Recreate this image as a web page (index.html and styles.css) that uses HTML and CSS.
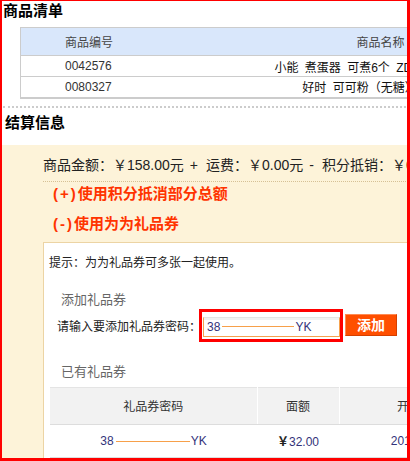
FILE: index.html
```html
<!doctype html>
<html>
	<head>
		<meta charset="utf-8">
		<title>结算信息</title>
		<link rel="stylesheet" href="styles.css">
	</head>
	<body>
		<div class="frame">
			<div class="page">
				<h2 class="title">商品清单</h2>
				<table class="goods">
					<tr>
						<th class="c-no">商品编号</th>
						<th class="c-name">商品名称</th>
					</tr>
					<tr>
						<td class="c-no">0042576</td>
						<td class="c-name">小能 煮蛋器 可煮6个 ZD-MQ01A 白色</td>
					</tr>
					<tr>
						<td class="c-no">0080327</td>
						<td class="c-name">好时 可可粉（无糖）226g/罐</td>
					</tr>
				</table>
				<div class="dots"></div>

				<h2 class="title title-pay">结算信息</h2>
				<div class="pay">
					<div class="sum">
						商品金额：<span class="num">￥158.00</span>元<span class="op">+</span>运费：<span class="num">￥0.00</span>元<span class="op">-</span>积分抵销：<span class="num">￥0.00</span>元
					</div>
					<div class="opt"><span class="sign">(+)</span>使用积分抵消部分总额</div>
					<div class="opt opt-gap"><span class="sign">(-)</span>使用为为礼品券</div>

					<div class="coupon-box">
						<p class="tip">提示：为为礼品券可多张一起使用。</p>
						<h3 class="sub">添加礼品券</h3>
						<div class="add-row">
							<span class="label">请输入要添加礼品券密码：</span>
							<span class="mark">
								<span class="code-input">38<i class="cut"></i>YK</span>
							</span>
							<button class="add-btn">添加</button>
						</div>
						<h3 class="sub sub-list">已有礼品券</h3>
						<table class="coupons">
							<tr>
								<th class="k-code">礼品券密码</th>
								<th class="k-val">面额</th>
								<th class="k-date">开始时间</th>
							</tr>
							<tr>
								<td class="k-code">38<i class="cut cut-row"></i>YK</td>
								<td class="k-val"><b>￥</b>32.00</td>
								<td class="k-date">2011-06-18</td>
							</tr>
						</table>
					</div>
				</div>
			</div>
		</div>
	</body>
</html>
```

FILE: styles.css
```css
* {
	margin: 0;
	padding: 0;
	box-sizing: border-box;
}
body {
	background-color: #fff;
	font-family: "Liberation Sans", "Noto Sans CJK SC", sans-serif;
	font-size: 12px;
	color: #333;
}
.frame {
	width: 410px;
	height: 461px;
	border-style: solid;
	border-color: #f00;
	border-width: 1px 3px 3px 2px;
	overflow: hidden;
}
.page {
	width: 640px;
}
.title {
	font-size: 15px;
	line-height: 20px;
	font-weight: bold;
	color: #000;
	padding-left: 1px;
}
.title-pay {
	margin-top: 5px;
	padding-left: 3px;
}

/* 商品清单 */
.goods {
	margin: 6px 0 0 18px;
	border-collapse: collapse;
	border-top: 1px solid #ccc;
	border-left: 1px solid #ccc;
	border-bottom: 2px solid #ccc;
}
.goods th, .goods td {
	font-weight: normal;
	white-space: nowrap;
	height: 21px;
	border-bottom: 1px solid #ccc;
}
.goods th {
	height: 28px;
	background-color: #d9e7fb;
	color: #444;
}
.goods .c-no {
	width: 150px;
	text-align: left;
	padding-left: 44px;
}
.goods .c-name {
	width: 420px;
	text-align: center;
	word-spacing: 3px;
}
.goods td.c-name {
	color: #111;
}
.dots {
	margin: 7px 0 0 1px;
	border-top: 2px dotted #ccc;
}

/* 结算信息 */
.pay {
	margin-top: 12px;
	background-color: #fdf3d9;
	padding: 8px 0 40px 41px;
}
.sum {
	font-size: 14px;
	line-height: 24px;
	color: #222;
	padding-bottom: 4px;
	border-bottom: 1px dotted #d6c095;
	white-space: nowrap;
}
.sum .op {
	margin: 0 8px 0 6px;
}
.opt {
	font-size: 15px;
	line-height: 24px;
	font-weight: bold;
	color: #ff3300;
	padding-left: 10px;
}
.opt .sign {
	letter-spacing: 2px;
}
.opt-gap {
	margin-top: 6px;
}
.coupon-box {
	margin-top: 6px;
	width: 560px;
	background-color: #fff;
	border: 1px solid #ecd4a4;
	padding: 11px 0 30px 5px;
}
.tip {
	line-height: 18px;
	color: #222;
}
.sub {
	margin: 19px 0 0 12px;
	font-size: 13px;
	line-height: 18px;
	font-weight: normal;
	color: #666;
}
.sub-list {
	margin-top: 21px;
}
.add-row {
	display: flex;
	align-items: center;
	margin-left: 8px;
	height: 33px;
}
.label {
	color: #222;
	margin-right: -2px;
}
.mark {
	display: block;
	border: 3px solid #f00;
	padding: 5px 0 2px 1px;
}
.code-input {
	display: flex;
	align-items: center;
	width: 137px;
	height: 20px;
	border: 1px solid #f6a24e;
	border-top-color: #e3e3e3;
	box-shadow: inset 0 2px 0 #f1f1f1;
	padding-left: 3px;
	color: #33337a;
}
.cut {
	display: inline-block;
	width: 72px;
	height: 1px;
	margin: 0 1px 0 2px;
	background-color: #f7a04a;
}
.add-btn {
	margin-left: 2px;
	width: 52px;
	height: 22px;
	background-color: #ff4f00;
	border: 1px solid #d54000;
	border-top-color: #ff8a52;
	border-left-color: #ff8a52;
	color: #fff;
	font-family: "Liberation Sans", "Noto Sans CJK SC", sans-serif;
	font-size: 14px;
	font-weight: bold;
	line-height: 18px;
}

/* 已有礼品券 */
.coupons {
	margin: 6px 0 0 1px;
	border-collapse: collapse;
}
.coupons th, .coupons td {
	text-align: center;
	white-space: nowrap;
}
.coupons th {
	height: 37px;
	font-weight: normal;
	background-color: #f2f2f2;
	border-top: 1px solid #e4e4e4;
	border-bottom: 1px solid #ddd;
	border-right: 1px solid #fff;
	color: #333;
}
.coupons td {
	height: 33px;
	border-bottom: 1px solid #ddd;
	color: #33337a;
}
.k-code { width: 207px; }
.k-val { width: 82px; }
.k-date { width: 164px; }
.coupons b {
	color: #222;
}
.cut-row {
	width: 74px;
	vertical-align: middle;
}
```
